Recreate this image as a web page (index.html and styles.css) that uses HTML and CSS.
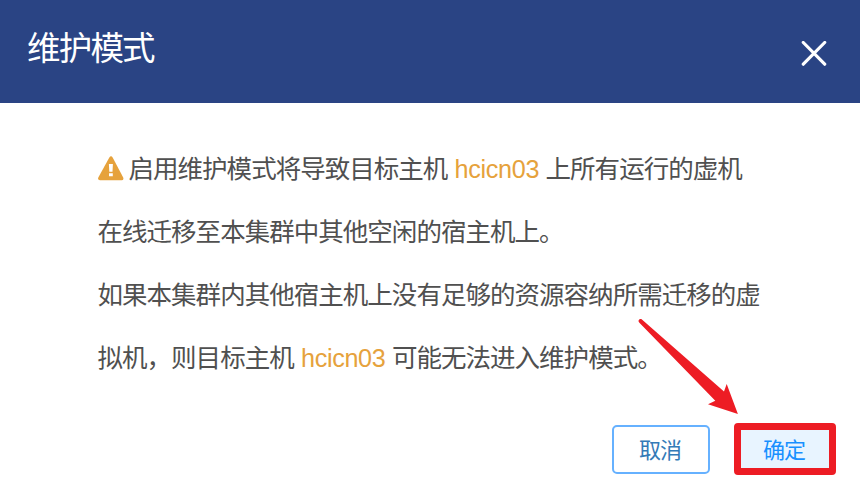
FILE: index.html
```html
<!DOCTYPE html>
<html lang="zh-CN">
<head>
<meta charset="utf-8">
<title>维护模式</title>
<link rel="stylesheet" href="styles.css">
</head>
<body>
<div class="dialog">
  <header class="dialog-header">
    <h1 class="title">维护模式</h1>
    <button class="close" aria-label="关闭"><svg width="26" height="26" viewBox="0 0 26 26"><path d="M2.3 1.5L23.7 23.2M23.7 1.5L2.3 23.2" stroke="#fff" stroke-width="3.2" stroke-linecap="round"/></svg></button>
  </header>
  <main class="content">
    <p><svg class="warning" width="26" height="25" viewBox="0 0 26 25"><path d="M11.2 1.7Q13 -1 14.8 1.7L25.2 21.5Q26 24.2 23.6 24.2H2Q-.6 24.2 .3 21.5Z" fill="#e6a23c"/><path d="M10.9 8H14.9L14.5 15.7H11.3ZM11 17.3H14.8V20.3H11Z" fill="#fff"/></svg>启用维护模式将导致目标主机 <span class="host">hcicn03</span> 上所有运行的虚机<br>在线迁移至本集群中其他空闲的宿主机上。</p>
    <p>如果本集群内其他宿主机上没有足够的资源容纳所需迁移的虚<br>拟机，则目标主机 <span class="host">hcicn03</span> 可能无法进入维护模式。</p>
  </main>
  <footer class="actions">
    <button class="button cancel">取消</button>
    <button class="button confirm">确定</button>
  </footer>
  <svg class="arrow" width="102" height="98" viewBox="0 0 102 98"><path d="M3.3 1.1Q1 .3 .5 2.7Q.4 3.7 1.4 4.8L77.3 82.8L70 86.2L99.9 95.9L88.7 66L86 73.6L4.2 1.7Z" fill="#ed1c24"/></svg>
</div>
</body>
</html>
```
FILE: styles.css
```css
* { box-sizing: border-box; }
body { margin: 0; background: #fff; font-family: "Liberation Sans", "Noto Sans CJK SC", sans-serif; }
.dialog { position: relative; width: 860px; height: 503px; overflow: hidden; }
.dialog-header { display: flex; justify-content: space-between; height: 103px; padding: 25px 33px 0 27px; background: #2a4484; }
.title { margin: 0; color: #fff; font-size: 33.5px; font-weight: 400; line-height: 48px; letter-spacing: -1.8px; }
.close { width: 26px; height: 26px; margin-top: 16px; padding: 0; border: 0; background: none; }
.close svg { display: block; }
.content { padding: 35px 0 0 97.5px; color: #505050; font-size: 25.5px; letter-spacing: -.97px; word-spacing: .7px; line-height: 63px; white-space: nowrap; }
.content p { height: 126px; margin: 0; }
.warning { margin-right: 5px; vertical-align: -3px; }
.host { margin: 0 -.4px 0 .4px; color: #e6a23c; font-size: 25.2px; letter-spacing: -.33px; }
.actions { display: flex; justify-content: flex-end; align-items: center; gap: 24px; height: 54px; margin-top: 32px; padding-right: 24px; }
.button { font-family: inherit; font-size: 22px; letter-spacing: -1px; line-height: 30px; padding: 4px 0 0; }
.cancel { width: 98px; height: 49px; padding-right: 2px; border: 2px solid #66b1ff; border-radius: 5px; background: #fff; color: #337ab7; }
.confirm { width: 102px; height: 52px; padding-right: 2px; border: 7px solid #ed1c24; border-radius: 4px; background: #e8f4ff; color: #1890ff; }
.arrow { position: absolute; left: 638px; top: 318px; }
```
